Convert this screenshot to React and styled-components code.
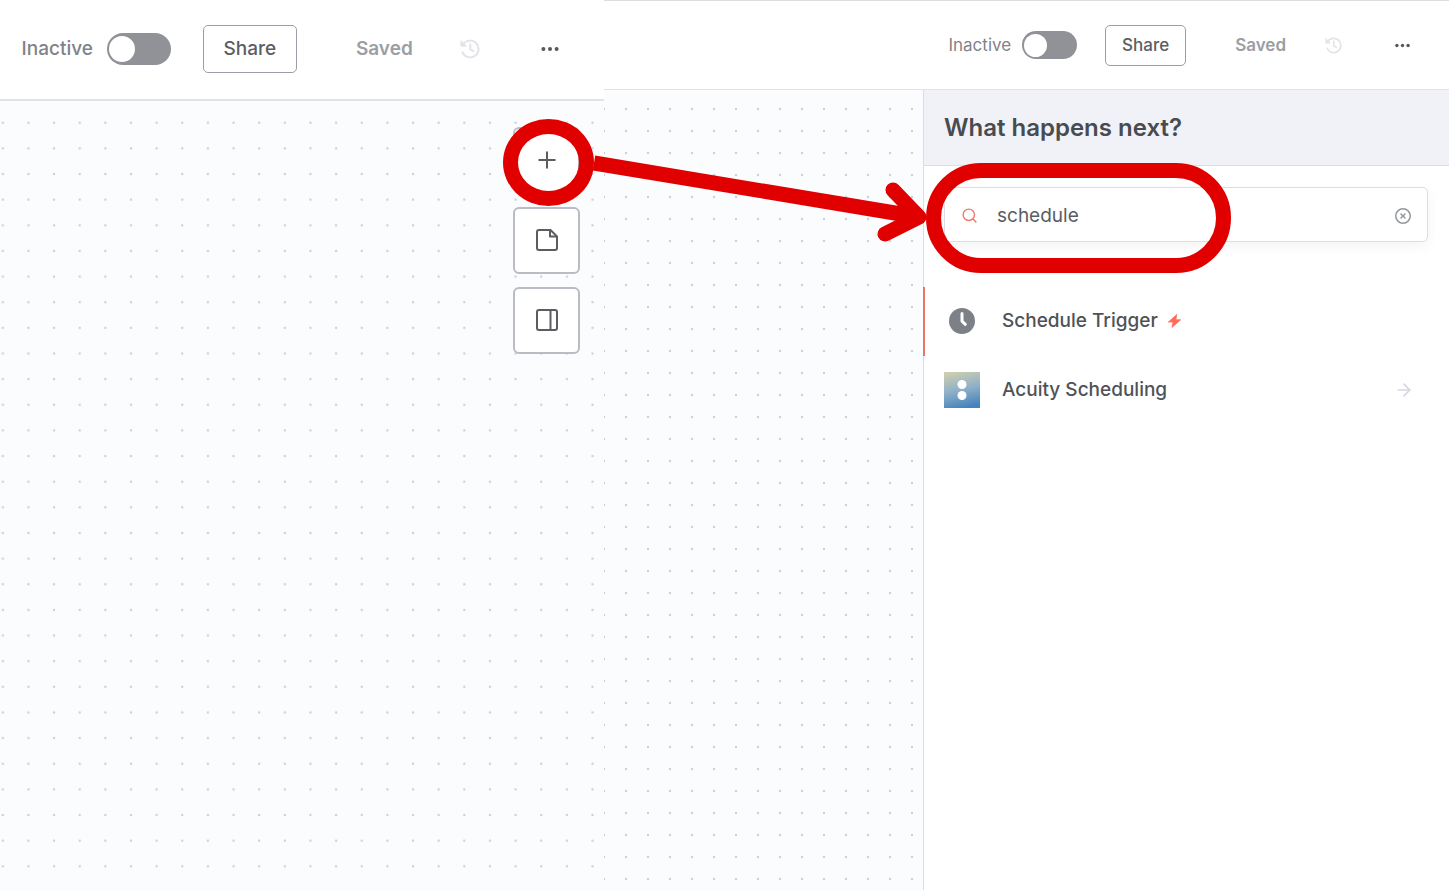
import React from "react";
import styled, { createGlobalStyle, css } from "styled-components";
import { ArrowRight, Search } from "lucide-react";
import { FaRegCircleXmark } from "react-icons/fa6";

const GlobalStyle = createGlobalStyle`
  *, *::before, *::after { box-sizing: border-box; }
  html, body, #root { margin: 0; min-height: 100vh; }
  body {
    background: #fff;
    color: #45484d;
    font-family: Inter, "Liberation Sans", sans-serif;
  }
  button { font: inherit; color: inherit; margin: 0; padding: 0; border: 0; background: none; cursor: pointer; }
`;

const MARK = "#e00000";

const sizes = {
  large: {
    bar: 101, line: 2, top: 0, font: 19, labelWeight: 500, padRight: 44, toggleW: 64, toggleH: 32, knob: 26,
    shareW: 94, shareH: 48, labelGap: 14, gapShare: 32, gapSaved: 59, gapHistory: 47, gapMore: 60,
    history: 20, more: 20, lift: 1,
  },
  small: {
    bar: 90, line: 1, top: 1, font: 17, labelWeight: 400, padRight: 38, toggleW: 55, toggleH: 28, knob: 23,
    shareW: 81, shareH: 41, labelGap: 11, gapShare: 28, gapSaved: 49, gapHistory: 39, gapMore: 52,
    history: 17, more: 17, lift: 0,
  },
};

const Page = styled.main`
  display: grid;
  grid-template-columns: 5fr 7fr;
  min-height: 100vh;
  padding-right: 1px;
`;

const Screen = styled.section`
  display: flex;
  flex-direction: column;
  min-width: 0;
`;

const Bar = styled.header`
  display: flex;
  align-items: center;
  justify-content: flex-end;
  height: ${(p) => p.$s.bar}px;
  padding-right: ${(p) => p.$s.padRight}px;
  padding-bottom: ${(p) => p.$s.lift}px;
  border-top: ${(p) => p.$s.top}px solid #dcdddf;
  border-bottom: ${(p) => p.$s.line}px solid #e0e3e8;
  background: #fff;
  font-size: ${(p) => p.$s.font}px;
  line-height: 24px;
  white-space: nowrap;
`;

const ToggleLabel = styled.label`
  display: flex;
  align-items: center;
  gap: ${(p) => p.$s.labelGap}px;
  font-weight: ${(p) => p.$s.labelWeight};
  color: #7f8389;
`;

const Toggle = styled.input`
  appearance: none;
  display: flex;
  align-items: center;
  width: ${(p) => p.$s.toggleW}px;
  height: ${(p) => p.$s.toggleH}px;
  margin: 0;
  padding: 0 2px;
  border-radius: 16px;
  background: #909298;
  &::before {
    content: "";
    width: ${(p) => p.$s.knob}px;
    height: ${(p) => p.$s.knob}px;
    border-radius: 50%;
    background: #fff;
  }
  &:checked { justify-content: flex-end; background: #13ce66; }
`;

const ShareButton = styled.button`
  width: ${(p) => p.$s.shareW}px;
  height: ${(p) => p.$s.shareH}px;
  margin-left: ${(p) => p.$s.gapShare}px;
  border: 1px solid #9b9ea4;
  border-radius: 5px;
  font-weight: 500;
  color: #5b5e63;
`;

const SavedText = styled.span`
  margin-left: ${(p) => p.$s.gapSaved}px;
  font-weight: 600;
  color: #9b9ea3;
`;

const BarIconButton = styled.button`
  display: flex;
  margin-left: ${(p) => p.$gap}px;
  color: ${(p) => p.$color};
`;

const Workspace = styled.div`
  display: flex;
  flex: 1;
`;

const Canvas = styled.div`
  position: relative;
  flex: 1;
  min-width: 0;
  background: #fbfcfe;
`;

const DotGrid = styled.svg`
  position: absolute;
  inset: 0;
  width: 100%;
  height: 100%;
`;

const Tools = styled.nav`
  position: relative;
  display: flex;
  flex-direction: column;
  align-items: flex-end;
  gap: 13px;
  padding: 26px 24px 0 0;
`;

const ToolButton = styled.button`
  position: relative;
  display: grid;
  place-items: center;
  width: 67px;
  height: 67px;
  padding: 0 0 2px 2px;
  border: 2px solid #b9bcc3;
  border-radius: 6px;
  background: #fff;
  color: #5b5d60;
`;

const markBase = css`
  position: absolute;
  pointer-events: none;
  border: 15px solid ${MARK};
`;

const ToolMark = styled.span`
  ${markBase}
  inset: -10px -16px -14px -12px;
  border-radius: 50%;
`;

const SearchMark = styled.span`
  ${markBase}
  top: -25px;
  left: -19px;
  width: 305px;
  height: 110px;
  border-radius: 55px;
`;

const MarkArrow = styled.svg`
  position: absolute;
  z-index: 2;
  top: 55px;
  right: -8px;
  pointer-events: none;
`;

const Panel = styled.aside`
  width: 526px;
  border-left: 1px solid #d9dce2;
  background: #fff;
`;

const PanelHeader = styled.div`
  padding: 22px 20px 21px;
  border-bottom: 1px solid #d9dfe6;
  background: #f1f2f7;
`;

const PanelTitle = styled.h1`
  margin: 0;
  font-size: 24px;
  font-weight: 600;
  line-height: 32px;
  color: #484b50;
`;

const SearchBox = styled.div`
  position: relative;
  display: flex;
  align-items: center;
  height: 55px;
  margin: 21px 21px 45px 20px;
  padding: 2px 16px 0;
  border: 1px solid #dcdee5;
  border-radius: 5px;
  box-shadow: 0 4px 12px rgba(60, 70, 90, 0.06);
  color: #f0786c;
`;

const SearchInput = styled.input`
  flex: 1;
  min-width: 0;
  height: 40px;
  margin: 0 16px 0 19px;
  padding: 0;
  border: 0;
  outline: 0;
  background: none;
  font: inherit;
  font-size: 19px;
  color: #5b5d62;
`;

const ClearButton = styled.button`
  display: flex;
  color: #95989e;
`;

const Results = styled.ul`
  margin: 0;
  padding: 0;
  list-style: none;
`;

const ResultButton = styled.button`
  display: flex;
  align-items: center;
  width: calc(100% + 1px);
  height: 69px;
  margin-left: -1px;
  padding: 0 35px 1px 19px;
  border-left: 2px solid ${(p) => (p.$active ? "#ee7468" : "transparent")};
  font-size: 19px;
  font-weight: 500;
  line-height: 28px;
  color: #4f5257;
`;

const ResultIcon = styled.span`
  display: grid;
  place-items: center;
  width: 36px;
  margin-right: 22px;
`;

const ResultArrow = styled.span`
  display: flex;
  margin-left: auto;
  color: #d5d8e0;
`;

const BoltIcon = styled.svg`
  margin-left: 10px;
`;

function Dots({ id, step, x, y }) {
  return (
    <DotGrid aria-hidden="true">
      <defs>
        <pattern id={id} width={step} height={step} x={x} y={y} patternUnits="userSpaceOnUse">
          <circle cx="5" cy="5" r="1.2" fill="#cdd0d6" />
        </pattern>
      </defs>
      <rect width="100%" height="100%" fill={`url(#${id})`} />
    </DotGrid>
  );
}

function HistoryIcon({ size }) {
  return (
    <svg width={size} height={size} viewBox="0 0 20 20" fill="none" stroke="currentColor" strokeWidth="2">
      <path d="M3 5.6A8.4 8.4 0 1 1 2.2 12.6" />
      <path d="M1 1.8V7.2H6.4Z" fill="currentColor" strokeWidth="1" strokeLinejoin="round" />
      <path d="M10.3 5.2V10.4L13.4 12.2" strokeLinecap="round" />
    </svg>
  );
}

function MoreIcon({ size }) {
  return (
    <svg width={size} height={size} viewBox="0 0 20 20" fill="currentColor">
      <circle cx="3.4" cy="10" r="2" />
      <circle cx="10" cy="10" r="2" />
      <circle cx="16.6" cy="10" r="2" />
    </svg>
  );
}

function Toolbar({ s, name }) {
  return (
    <Bar $s={s}>
      <ToggleLabel $s={s} htmlFor={name}>
        Inactive
        <Toggle $s={s} id={name} type="checkbox" role="switch" />
      </ToggleLabel>
      <ShareButton $s={s} type="button">Share</ShareButton>
      <SavedText $s={s}>Saved</SavedText>
      <BarIconButton type="button" aria-label="History" $gap={s.gapHistory} $color="#e3e4e8">
        <HistoryIcon size={s.history} />
      </BarIconButton>
      <BarIconButton type="button" aria-label="More" $gap={s.gapMore} $color="#55585c">
        <MoreIcon size={s.more} />
      </BarIconButton>
    </Bar>
  );
}

export default function App() {
  return (
    <>
      <GlobalStyle />
      <Page>
        <Screen>
          <Toolbar s={sizes.large} name="active-before" />
          <Workspace>
            <Canvas>
              <Dots id="dots-before" step={25.64} x={-2.2} y={16.8} />
              <Tools>
                <ToolButton type="button" aria-label="Add node">
                  <svg width="22" height="22" viewBox="0 0 22 22" stroke="currentColor" strokeWidth="2">
                    <path d="M11 2.5V19.5M2.5 11H19.5" />
                  </svg>
                  <ToolMark />
                </ToolButton>
                <ToolButton type="button" aria-label="Add note">
                  <svg width="22" height="22" viewBox="0 0 22 22" fill="none" stroke="currentColor" strokeWidth="2" strokeLinejoin="round">
                    <path d="M3 1H14.5L21 7.5V19A2 2 0 0 1 19 21H3A2 2 0 0 1 1 19V3A2 2 0 0 1 3 1Z" />
                    <path d="M14 1V7.5H21" />
                  </svg>
                </ToolButton>
                <ToolButton type="button" aria-label="Toggle panel">
                  <svg width="22" height="22" viewBox="0 0 22 22" fill="none" stroke="currentColor" strokeWidth="2">
                    <rect x="1" y="1" width="20" height="20" rx="2" />
                    <path d="M14.5 1V21" />
                  </svg>
                </ToolButton>
              </Tools>
            </Canvas>
          </Workspace>
        </Screen>
        <Screen>
          <Toolbar s={sizes.small} name="active-after" />
          <Workspace>
            <Canvas>
              <Dots id="dots-after" step={22} x={17} y={14} />
              <MarkArrow width="340" height="110" viewBox="0 0 340 110" fill="none" stroke={MARK} strokeWidth="15" aria-hidden="true">
                <path d="M3 18L328 72" />
                <path d="M302 45L328 72L294 89" strokeLinecap="round" strokeLinejoin="round" />
              </MarkArrow>
            </Canvas>
            <Panel>
              <PanelHeader>
                <PanelTitle>What happens next?</PanelTitle>
              </PanelHeader>
              <SearchBox>
                <Search size={17} strokeWidth={2} />
                <SearchInput type="text" aria-label="Search nodes" defaultValue="schedule" />
                <ClearButton type="button" aria-label="Clear">
                  <FaRegCircleXmark size={16} />
                </ClearButton>
                <SearchMark />
              </SearchBox>
              <Results>
                <li>
                  <ResultButton type="button" $active>
                    <ResultIcon>
                      <svg width="26" height="26" viewBox="0 0 26 26">
                        <circle cx="13" cy="13" r="13" fill="#7d8187" />
                        <path d="M13 5.5V13.2L16.3 16.3" fill="none" stroke="#fff" strokeWidth="3" strokeLinecap="round" strokeLinejoin="round" />
                      </svg>
                    </ResultIcon>
                    Schedule Trigger
                    <BoltIcon width="13" height="14" viewBox="0 0 13 14" fill="#ff6d5a">
                      <path d="M8.8 0.6L0.4 8H5L4 13.4L12.6 5.8H7.8Z" stroke="#ff6d5a" strokeWidth="0.8" strokeLinejoin="round" />
                    </BoltIcon>
                  </ResultButton>
                </li>
                <li>
                  <ResultButton type="button">
                    <ResultIcon>
                      <svg width="36" height="36" viewBox="0 0 36 36">
                        <defs>
                          <linearGradient id="acuity" x1="0.3" y1="0" x2="0.55" y2="1">
                            <stop offset="0" stopColor="#cbcdb0" />
                            <stop offset="0.5" stopColor="#8fb0c8" />
                            <stop offset="1" stopColor="#4583bc" />
                          </linearGradient>
                        </defs>
                        <rect width="36" height="36" fill="url(#acuity)" />
                        <circle cx="18" cy="12.5" r="4.5" fill="#fff" />
                        <circle cx="18" cy="23.5" r="4.5" fill="#fff" />
                      </svg>
                    </ResultIcon>
                    Acuity Scheduling
                    <ResultArrow>
                      <ArrowRight size={20} strokeWidth={2} />
                    </ResultArrow>
                  </ResultButton>
                </li>
              </Results>
            </Panel>
          </Workspace>
        </Screen>
      </Page>
    </>
  );
}
